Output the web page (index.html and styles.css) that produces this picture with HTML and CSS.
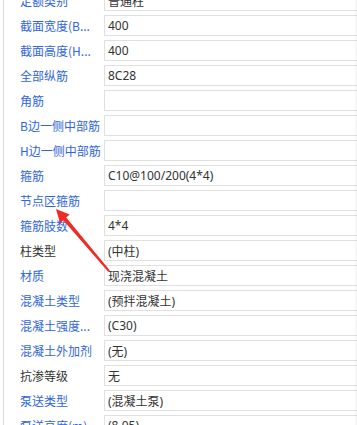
FILE: index.html
```html
<!DOCTYPE html>
<html lang="zh-CN">
<head>
<meta charset="utf-8">
<title>属性</title>
<link rel="stylesheet" href="styles.css">
</head>
<body>
<div class="panel">
  <div class="row"><div class="label blue">定额类别</div><div class="value">普通柱</div></div>
  <div class="row"><div class="label blue">截面宽度(B...</div><div class="value">400</div></div>
  <div class="row"><div class="label blue">截面高度(H...</div><div class="value">400</div></div>
  <div class="row"><div class="label blue">全部纵筋</div><div class="value">8C28</div></div>
  <div class="row"><div class="label blue">角筋</div><div class="value"></div></div>
  <div class="row"><div class="label blue">B边一侧中部筋</div><div class="value"></div></div>
  <div class="row"><div class="label blue">H边一侧中部筋</div><div class="value"></div></div>
  <div class="row"><div class="label blue">箍筋</div><div class="value">C10@100/200(4*4)</div></div>
  <div class="row"><div class="label blue">节点区箍筋</div><div class="value"></div></div>
  <div class="row"><div class="label blue">箍筋肢数</div><div class="value">4*4</div></div>
  <div class="row"><div class="label">柱类型</div><div class="value">(中柱)</div></div>
  <div class="row"><div class="label blue">材质</div><div class="value">现浇混凝土</div></div>
  <div class="row"><div class="label blue">混凝土类型</div><div class="value">(预拌混凝土)</div></div>
  <div class="row"><div class="label blue">混凝土强度...</div><div class="value">(C30)</div></div>
  <div class="row"><div class="label blue">混凝土外加剂</div><div class="value">(无)</div></div>
  <div class="row"><div class="label">抗渗等级</div><div class="value">无</div></div>
  <div class="row"><div class="label blue">泵送类型</div><div class="value">(混凝土泵)</div></div>
  <div class="row"><div class="label blue">泵送高度(m)</div><div class="value">(8.05)</div></div>
</div>
<div class="edge"></div>
<svg class="arrow" width="357" height="425" viewBox="0 0 357 425" xmlns="http://www.w3.org/2000/svg">
  <polygon points="56,209 69.6,214.4 66.2,217.6 109.9,270.4 108.2,271.8 63.3,220.2 60,223" fill="#ef2b25"/>
</svg>
</body>
</html>
```

FILE: styles.css
```css
html, body {
  margin: 0;
  padding: 0;
  background: #ffffff;
  overflow: hidden;
  width: 357px;
  height: 425px;
}

body {
  position: relative;
  font-family: "Noto Sans", "Noto Sans CJK SC", sans-serif;
  font-size: 12px;
  color: #333333;
}

.panel {
  margin-left: 3px;
  margin-top: -10px;
  border-left: 1px solid #dadada;
  display: flex;
  flex-direction: column;
  gap: 4px;
  padding-bottom: 20px;
}

.row {
  display: flex;
  height: 21px;
  align-items: stretch;
}

.label {
  width: 100px;
  flex: none;
  box-sizing: border-box;
  padding-left: 16px;
  display: flex;
  align-items: center;
  white-space: nowrap;
  overflow: hidden;
  color: #333333;
  font-family: "Noto Sans CJK SC", sans-serif;
}

.label.blue {
  color: #2f66da;
}

.value {
  flex: none;
  width: 262px;
  box-sizing: border-box;
  border: 1px solid #e0e0e0;
  background: #ffffff;
  padding-left: 3px;
  display: flex;
  align-items: center;
  white-space: nowrap;
  color: #333333;
}

.edge {
  position: absolute;
  top: 0;
  right: 0;
  width: 3px;
  height: 425px;
  background: linear-gradient(to right, rgba(0,0,0,0), rgba(0,0,0,0.05));
}

.arrow {
  position: absolute;
  top: 0;
  left: 0;
  pointer-events: none;
}
```
